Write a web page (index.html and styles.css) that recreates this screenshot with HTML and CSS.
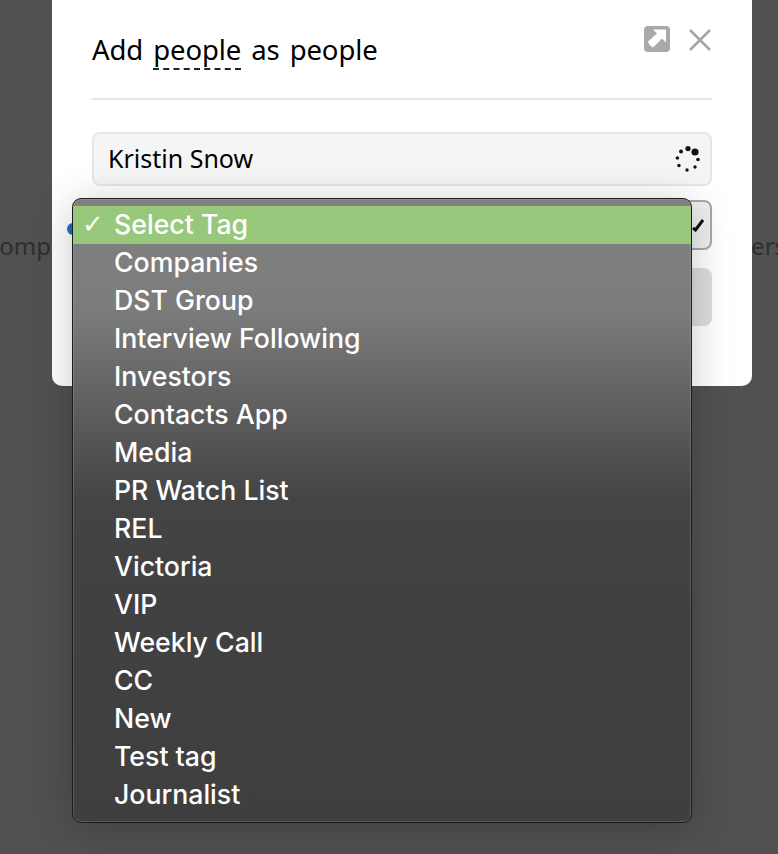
FILE: index.html
```html
<!DOCTYPE html>
<html lang="en">
<head>
<meta charset="utf-8">
<title>Add people as people</title>
<link rel="stylesheet" href="styles.css">
</head>
<body>
<div class="backdrop">
  <span class="bg-text bg-left">Companies</span>
  <span class="bg-text bg-right">Customers</span>
</div>
<section class="modal">
  <header class="modal-head">
    <h1 class="title">Add <span class="dashed">people</span> as people</h1>
    <div class="actions">
      <svg class="icon-open" width="26" height="26" viewBox="0 0 26 26"><rect width="26" height="26" rx="4" fill="#a9a9a9"/><path d="M5.5 20.5 9 23l9-9 4 4V5H9l4 4-9 8z" fill="#fff" transform="translate(0 -1.5)"/></svg>
      <svg class="icon-close" width="22" height="22" viewBox="0 0 22 22"><path d="M1 1l20 20M21 1 1 21" stroke="#a6a6a6" stroke-width="2.6" fill="none"/></svg>
    </div>
  </header>
  <div class="field name-field">
    <span class="name-text">Kristin Snow</span>
    <svg class="spinner" width="28" height="28" viewBox="0 0 28 28" fill="#111">
      <circle cx="21" cy="7" r="3.6"/><circle cx="14" cy="3.6" r="2.6"/><circle cx="7" cy="6.5" r="2"/><circle cx="3.4" cy="13" r="1.8"/><circle cx="5" cy="20.5" r="1.7"/><circle cx="13" cy="25" r="1.7"/><circle cx="21" cy="22" r="1.7"/><circle cx="24" cy="14.5" r="1.8"/>
    </svg>
  </div>
  <div class="field tag-field"><svg class="chev" width="12" height="14" viewBox="0 0 12 14"><path d="M1 10l2.5 2L11 2" stroke="#111" stroke-width="3" fill="none"/></svg></div>
  <div class="submit"></div>
  <span class="dot"></span>
</section>
<div class="menu">
  <ul class="menu-list">
    <li class="menu-item selected"><span class="check">✓</span>Select Tag</li>
    <li class="menu-item">Companies</li>
    <li class="menu-item">DST Group</li>
    <li class="menu-item">Interview Following</li>
    <li class="menu-item">Investors</li>
    <li class="menu-item">Contacts App</li>
    <li class="menu-item">Media</li>
    <li class="menu-item">PR Watch List</li>
    <li class="menu-item">REL</li>
    <li class="menu-item">Victoria</li>
    <li class="menu-item">VIP</li>
    <li class="menu-item">Weekly Call</li>
    <li class="menu-item">CC</li>
    <li class="menu-item">New</li>
    <li class="menu-item">Test tag</li>
    <li class="menu-item">Journalist</li>
  </ul>
</div>
</body>
</html>
```

FILE: styles.css
```css
* { box-sizing: border-box; }
html, body { margin: 0; height: 100%; }
body {
  width: 778px;
  height: 854px;
  overflow: hidden;
  position: relative;
  background: #515151;
  font-family: "Noto Sans", sans-serif;
}
.backdrop { position: absolute; inset: 0; overflow: hidden; }
.bg-text { position: absolute; top: 230px; font-size: 24px; line-height: 32px; color: #2e2e2e; white-space: nowrap; }
.bg-left { left: -16px; }
.bg-right { left: 664px; }

.modal {
  position: absolute;
  left: 52px;
  top: -20px;
  width: 700px;
  height: 406px;
  padding: 40px 40px 0;
  background: #fff;
  border-radius: 0 0 10px 10px;
}
.modal-head {
  display: flex;
  justify-content: space-between;
  height: 80px;
  border-bottom: 2px solid #e6e6e6;
}
.title {
  margin: 0;
  font-size: 27.5px;
  font-weight: 400;
  line-height: 60px;
  height: 60px;
  color: #000;
  word-spacing: 3px;
  letter-spacing: -0.1px;
}
.dashed { border-bottom: 2px dashed #222; padding-bottom: 0; }
.actions { display: flex; gap: 19px; align-items: flex-start; padding-top: 6px; margin-right: 1px; }
.icon-close { margin-top: 3px; }

.field {
  display: flex;
  align-items: center;
  justify-content: space-between;
  width: 620px;
  border-radius: 8px;
}
.name-field {
  height: 54px;
  margin-top: 32px;
  padding: 0 8px 0 14px;
  background: #f5f5f5;
  border: 2px solid #e6e6e6;
  font-size: 25px;
  color: #000;
}
.name-text { margin-top: -2px; }
.tag-field {
  height: 50px;
  margin-top: 14px;
  justify-content: flex-end;
  padding-right: 6px;
  background: #eee;
  border: 2px solid #a8a8a8;
}
.submit {
  width: 620px;
  height: 58px;
  margin-top: 18px;
  background: #dcdddd;
  border-radius: 8px;
}
.dot {
  position: absolute;
  left: 15px;
  top: 243px;
  width: 12px;
  height: 12px;
  border-radius: 50%;
  background: #1f6fc4;
}

.menu {
  position: absolute;
  left: 72px;
  top: 198px;
  width: 620px;
  height: 625px;
  border: 1px solid #1c1c1c;
  border-radius: 9px;
  background: linear-gradient(#808080 0, #7c7c7c 110px, #444 300px, #414141 400px, #3f3f3f 100%);
  box-shadow: inset 0 0 0 1px rgba(255,255,255,.14), 0 6px 40px rgba(0,0,0,.22);
  padding-top: 7px;
  overflow: hidden;
}
.menu-list { list-style: none; margin: 0; padding: 0; }
.menu-item {
  position: relative;
  height: 38px;
  line-height: 36px;
  padding-left: 41px;
  font-family: Inter, sans-serif;
  font-size: 26.7px;
  font-weight: 500;
  color: #fff;
  white-space: nowrap;
}
.selected { background: #97c87c; }
.check { position: absolute; left: 9px; top: 0; font-family: "DejaVu Sans", sans-serif; font-size: 26px; font-weight: 400; }
```
